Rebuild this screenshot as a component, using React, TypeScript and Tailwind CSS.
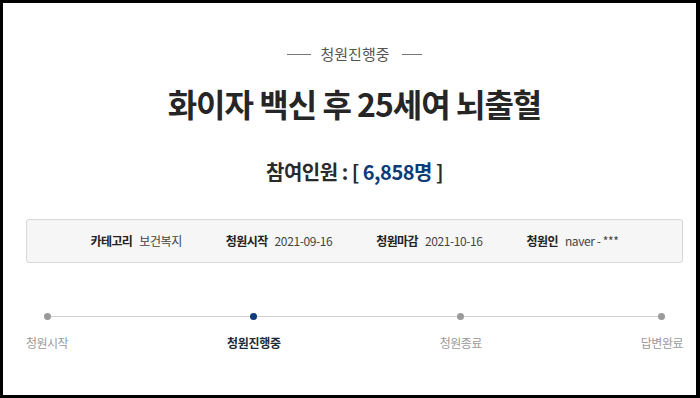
import React from "react";

const KR = { fontFamily: '"Noto Sans CJK KR", "Noto Sans", sans-serif' };

function InfoItem({ label, value }: { label: string; value: string }) {
  return (
    <div className="flex items-center gap-[7px]">
      <span className="font-bold text-[12px] tracking-[-0.6px] text-[#222]">{label}</span>
      <span className="text-[12px] tracking-[-0.4px] text-[#444]">{value}</span>
    </div>
  );
}

function Step({ label, active }: { label: string; active?: boolean }) {
  return (
    <div className="relative z-10 flex flex-col items-center">
      <div
        className={
          active
            ? "w-[7px] h-[7px] rounded-full bg-[#0d3a78]"
            : "w-[7px] h-[7px] rounded-full bg-[#9a9a9a]"
        }
      />
      <span
        className={
          active
            ? "mt-[14px] text-[12px] leading-[18px] tracking-[-0.3px] font-bold text-[#1e2a3a]"
            : "mt-[14px] text-[12px] leading-[18px] tracking-[-0.5px] text-[#9a9a9a]"
        }
      >
        {label}
      </span>
    </div>
  );
}

export default function App() {
  return (
    <div className="w-[700px] h-[398px] bg-black pt-[3px] pl-[3px] pr-[4px] pb-[3px]" style={KR}>
      <div className="w-full h-full bg-white pl-[23px] pr-[13px] pt-[40px] flex flex-col">
        <div className="flex items-center justify-center h-[22px]">
          <div className="w-[24px] h-px bg-[#777]" />
          <span className="ml-[9px] mr-[12px] text-[15px] text-[#555]">청원진행중</span>
          <div className="w-[20px] h-px bg-[#777]" />
        </div>
        <h1 className="mt-[18px] h-[40px] leading-[40px] text-center text-[32px] font-bold tracking-[-1px] text-[#262626]">
          화이자 백신 후 25세여 뇌출혈
        </h1>
        <div className="mt-[34px] h-[30px] leading-[30px] text-center text-[20px] font-bold tracking-[-0.5px] text-[#2a2a2a]">
          참여인원 : [ <span className="text-[#0d3a78]">6,858명</span> ]
        </div>
        <div className="mt-[32px] h-[44px] rounded-[3px] border border-[#d8d8d8] bg-[#f6f6f6] flex items-center justify-center gap-[44px]">
          <InfoItem label="카테고리" value="보건복지" />
          <InfoItem label="청원시작" value="2021-09-16" />
          <InfoItem label="청원마감" value="2021-10-16" />
          <InfoItem label="청원인" value="naver - ***" />
        </div>
        <div className="relative mt-[50px] flex justify-between">
          <div className="absolute left-[20px] right-[20px] top-[3px] h-px bg-[#cfcfcf]" />
          <Step label="청원시작" />
          <Step label="청원진행중" active />
          <Step label="청원종료" />
          <Step label="답변완료" />
        </div>
      </div>
    </div>
  );
}
